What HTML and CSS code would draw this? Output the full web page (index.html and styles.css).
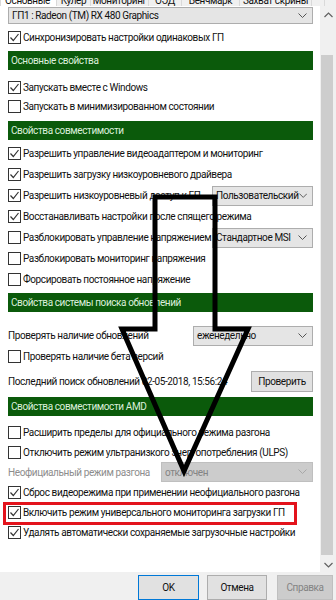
FILE: index.html
```html
<!DOCTYPE html>
<html lang="ru">

<head>
    <meta charset="UTF-8">
    <title>Свойства</title>
    <link rel="stylesheet" href="styles.css">
</head>

<body>
    <div class="tabs">
        <div class="tab tab-main tab-active">Основные</div>
        <div class="tab tab-cooler">Кулер</div>
        <div class="tab tab-monitor">Мониторинг</div>
        <div class="tab tab-osd">ОЭД</div>
        <div class="tab tab-bench">Бенчмарк</div>
        <div class="tab tab-capture">Захват скрины</div>
        <div class="tab tab-scroll"></div>
        <div class="tab tab-scroll"></div>
    </div>

    <div class="main">
        <div class="panel">
            <div class="combo combo-gpu">
                <span>ГП1 : Radeon (TM) RX 480 Graphics</span>
                <svg class="chevron" width="9" height="6" viewBox="0 0 9 6"><polyline points="0.5,0.5 4.5,4.5 8.5,0.5" /></svg>
            </div>

            <div class="row row-sync">
                <span class="check checked"><svg viewBox="0 0 11 11"><polyline points="1.5,5.5 4.3,8.5 9.5,2" /></svg></span>
                <span>Синхронизировать настройки одинаковых ГП</span>
            </div>

            <div class="header header-first">Основные свойства</div>
            <div class="row row-small row-after-header">
                <span class="check checked"><svg viewBox="0 0 11 11"><polyline points="1.5,5.5 4.3,8.5 9.5,2" /></svg></span>
                <span>Запускать вместе с Windows</span>
            </div>
            <div class="row row-small">
                <span class="check"></span>
                <span>Запускать в минимизированном состоянии</span>
            </div>

            <div class="header header-compat">Свойства совместимости</div>
            <div class="row row-compat-first">
                <span class="check checked"><svg viewBox="0 0 11 11"><polyline points="1.5,5.5 4.3,8.5 9.5,2" /></svg></span>
                <span>Разрешить управление видеоадаптером и мониторинг</span>
            </div>
            <div class="row">
                <span class="check checked"><svg viewBox="0 0 11 11"><polyline points="1.5,5.5 4.3,8.5 9.5,2" /></svg></span>
                <span>Разрешить загрузку низкоуровневого драйвера</span>
            </div>
            <div class="row">
                <span class="check checked"><svg viewBox="0 0 11 11"><polyline points="1.5,5.5 4.3,8.5 9.5,2" /></svg></span>
                <span class="label">Разрешить низкоуровневый доступ к ГП</span>
                <div class="combo combo-access">
                    <span>Пользовательский</span>
                    <svg class="chevron" width="9" height="6" viewBox="0 0 9 6"><polyline points="0.5,0.5 4.5,4.5 8.5,0.5" /></svg>
                </div>
            </div>
            <div class="row">
                <span class="check checked"><svg viewBox="0 0 11 11"><polyline points="1.5,5.5 4.3,8.5 9.5,2" /></svg></span>
                <span>Восстанавливать настройки после спящего режима</span>
            </div>
            <div class="row">
                <span class="check"></span>
                <span class="label">Разблокировать управление напряжением</span>
                <div class="combo combo-access">
                    <span>Стандартное MSI</span>
                    <svg class="chevron" width="9" height="6" viewBox="0 0 9 6"><polyline points="0.5,0.5 4.5,4.5 8.5,0.5" /></svg>
                </div>
            </div>
            <div class="row">
                <span class="check"></span>
                <span>Разблокировать мониторинг напряжения</span>
            </div>
            <div class="row">
                <span class="check"></span>
                <span>Форсировать постоянное напряжение</span>
            </div>

            <div class="header header-update">Свойства системы поиска обновлений</div>
            <div class="row row-update-first">
                <span class="label">Проверять наличие обновлений</span>
                <div class="combo combo-period">
                    <span>еженедельно</span>
                    <svg class="chevron" width="9" height="6" viewBox="0 0 9 6"><polyline points="0.5,0.5 4.5,4.5 8.5,0.5" /></svg>
                </div>
            </div>
            <div class="row">
                <span class="check"></span>
                <span>Проверять наличие бета версий</span>
            </div>
            <div class="row row-last-check">
                <span class="label">Последний поиск обновлений 02-05-2018, 15:56:24</span>
                <button class="btn btn-check">Проверить</button>
            </div>

            <div class="header header-amd">Свойства совместимости AMD</div>
            <div class="row row-amd row-amd-first">
                <span class="check"></span>
                <span>Расширить пределы для официального режима разгона</span>
            </div>
            <div class="row row-amd">
                <span class="check"></span>
                <span>Отключить режим ультранизкого энергопотребления (ULPS)</span>
            </div>
            <div class="row row-amd">
                <span class="label label-disabled">Неофициальный режим разгона</span>
                <div class="combo combo-unofficial combo-disabled">
                    <span>отключен</span>
                    <svg class="chevron" width="9" height="6" viewBox="0 0 9 6"><polyline points="0.5,0.5 4.5,4.5 8.5,0.5" /></svg>
                </div>
            </div>
            <div class="row row-amd">
                <span class="check checked"><svg viewBox="0 0 11 11"><polyline points="1.5,5.5 4.3,8.5 9.5,2" /></svg></span>
                <span>Сброс видеорежима при применении неофициального разгона</span>
            </div>
            <div class="row row-amd row-marked">
                <span class="check checked"><svg viewBox="0 0 11 11"><polyline points="1.5,5.5 4.3,8.5 9.5,2" /></svg></span>
                <span>Включить режим универсального мониторинга загрузки ГП</span>
            </div>
            <div class="row row-amd">
                <span class="check checked"><svg viewBox="0 0 11 11"><polyline points="1.5,5.5 4.3,8.5 9.5,2" /></svg></span>
                <span>Удалять автоматически сохраняемые загрузочные настройки</span>
            </div>
        </div>

        <div class="scrollbar">
            <div class="sb-btn">
                <svg class="sb-arrow" width="9" height="6" viewBox="0 0 9 6"><polyline points="0.5,5 4.5,1 8.5,5" /></svg>
            </div>
            <div class="sb-thumb"></div>
            <div class="sb-btn sb-btn-down">
                <svg class="sb-arrow" width="9" height="6" viewBox="0 0 9 6"><polyline points="0.5,1 4.5,5 8.5,1" /></svg>
            </div>
        </div>
    </div>

    <div class="footer">
        <button class="btn btn-ok">OK</button>
        <button class="btn btn-cancel">Отмена</button>
        <button class="btn btn-help" disabled>Справка</button>
    </div>

    <!-- annotation arrow drawn over the dialog -->
    <svg class="arrow" width="336" height="600" viewBox="0 0 336 600">
        <polygon points="155,197 215,197 215,329 248,329 184,471 122,329 155,329" />
    </svg>
</body>

</html>
```

FILE: styles.css
```css
/* General */
body {
    margin: 0;
    width: 336px;
    height: 600px;
    overflow: hidden;
    position: relative;
    background: #f0f0f0;
    font-family: Roboto, 'Noto Sans', sans-serif;
    font-size: 10px;
    letter-spacing: -0.4px;
    color: #111;
}

/* Tabs (only the lower edge is visible) */
.tabs {
    display: flex;
    align-items: flex-end;
    height: 6px;
    overflow: hidden;
}

.tab {
    flex: none;
    box-sizing: border-box;
    height: 20px;
    padding-top: 7px;
    line-height: 14px;
    border: 1px solid #d9d9d9;
    border-bottom: none;
    margin-left: -1px;
    white-space: nowrap;
    text-align: center;
    overflow: hidden;
}

.tab-active {
    background: #fff;
}

.tab-main {
    width: 57px;
    margin-left: 0;
    text-align: right;
    padding-right: 6px;
}

.tab-cooler { width: 35px; }
.tab-monitor { width: 59px; }
.tab-osd { width: 34px; }
.tab-bench { width: 59px; }
.tab-capture { width: 73px; }
.tab-scroll { width: 14px; }

/* Main area */
.main {
    display: flex;
    height: 566px;
}

.panel {
    flex: 1;
    min-width: 0;
    background: #fff;
    padding: 1px 7px 0 8px;
    overflow: hidden;
}

.row {
    display: flex;
    align-items: center;
    height: 21px;
    white-space: nowrap;
}

.row-sync {
    margin-top: 3px;
    height: 20px;
}

.row-small {
    height: 19px;
}

.row-after-header {
    margin-top: 8px;
}

.row-compat-first {
    margin-top: 3px;
}

.row-update-first {
    margin-top: 13px;
}

.row-last-check {
    margin-top: 3px;
    height: 22px;
}

.row-amd {
    height: 20px;
}

.row-amd-first {
    margin-top: 6px;
}

.row-marked {
    position: relative;
}

.row-marked::after {
    content: "";
    position: absolute;
    left: -5px;
    right: 16px;
    top: 0;
    bottom: -3px;
    border: 3px solid #e3131c;
}

.label {
    flex: 1;
    min-width: 0;
    overflow: hidden;
}

.label-disabled {
    color: #8d8d8d;
}

/* Checkboxes */
.check {
    flex: none;
    box-sizing: border-box;
    width: 13px;
    height: 13px;
    margin-right: 2px;
    border: 1px solid #333;
    background: #fff;
}

.check svg {
    display: block;
    width: 11px;
    height: 11px;
    fill: none;
    stroke: #333;
    stroke-width: 1.2;
}

/* Section headers */
.header {
    height: 19px;
    line-height: 19px;
    padding-left: 3px;
    background: #0b5a0b;
    color: #dcefdc;
}

.header-first { margin-top: 4px; }
.header-compat { margin-top: 5px; }
.header-update { margin-top: 3px; }
.header-amd { margin-top: 5px; }

/* Combo boxes */
.combo {
    flex: none;
    box-sizing: border-box;
    height: 20px;
    display: flex;
    align-items: center;
    justify-content: space-between;
    padding: 0 5px 0 3px;
    border: 1px solid #adadad;
    background: #e5e5e5;
    white-space: nowrap;
}

.combo-gpu {
    height: 17px;
}

.combo-access { width: 101px; }
.combo-period { width: 120px; }
.combo-unofficial { width: 152px; }

.combo-disabled {
    background: #cccccc;
    border-color: #bfbfbf;
    color: #838383;
}

.chevron {
    fill: none;
    stroke: #555;
    stroke-width: 1;
}

.combo-disabled .chevron {
    stroke: #a8a8a8;
}

/* Buttons */
.btn {
    box-sizing: border-box;
    height: 25px;
    padding: 0;
    border: 1px solid #adadad;
    background: #e1e1e1;
    font-family: inherit;
    font-size: 10px;
    letter-spacing: inherit;
    color: #111;
}

.btn-check {
    flex: none;
    width: 62px;
    height: 21px;
}

.btn-ok {
    width: 61px;
    border-color: #0078d7;
}

.btn-cancel {
    width: 60px;
    margin-left: 8px;
}

.btn-help {
    width: 56px;
    margin-left: 10px;
    background: #cccccc;
    border-color: #bfbfbf;
    color: #838383;
}

/* Scrollbar */
.scrollbar {
    width: 16px;
    display: flex;
    flex-direction: column;
    background: #f0f0f0;
}

.sb-btn {
    height: 17px;
    display: flex;
    align-items: center;
    justify-content: center;
}

.sb-btn-down {
    margin-top: auto;
    height: 15px;
}

.sb-arrow {
    fill: none;
    stroke: #606060;
    stroke-width: 1.2;
}

.sb-thumb {
    margin: 32px 3px 0 1px;
    height: 500px;
    background: #cdcdcd;
}

/* Footer */
.footer {
    display: flex;
    justify-content: flex-end;
    padding: 3px 3px 0 0;
}

/* Annotation arrow */
.arrow {
    position: absolute;
    top: 0;
    left: 0;
    pointer-events: none;
}

.arrow polygon {
    fill: none;
    stroke: #000;
    stroke-width: 5;
    stroke-linejoin: miter;
}
```
